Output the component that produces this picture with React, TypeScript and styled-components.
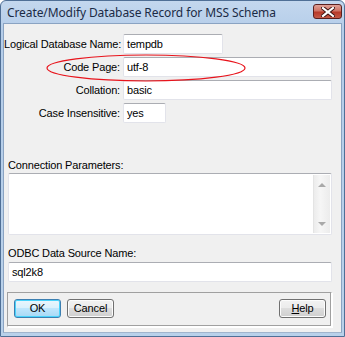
import React from 'react'
import styled, { createGlobalStyle } from 'styled-components'

const GlobalStyle = createGlobalStyle`
  html, body {
    margin: 0;
    padding: 0;
    background: #ffffff;
  }
  body {
    font-family: "Liberation Sans", Arial, sans-serif;
    font-size: 11px;
    letter-spacing: -0.15px;
    color: #000;
  }
`

const FIELDS = [
  { label: 'Logical Database Name:', value: 'tempdb', width: 100 },
  { label: 'Code Page:', value: 'utf-8', width: 209 },
  { label: 'Collation:', value: 'basic', width: 209 },
  { label: 'Case Insensitive:', value: 'yes', width: 43 },
]

export default function App() {
  return (
    <>
      <GlobalStyle />
      <Window>
        <TitleBar>
          <Title>Create/Modify Database Record for MSS Schema</Title>
          <CloseButton aria-label="Close">
            <svg width="14" height="10" viewBox="0 0 14 10">
              <path d="M2 1 L12 9 M12 1 L2 9" stroke="#3a1010" strokeWidth="4" strokeLinecap="square" />
              <path d="M2 1 L12 9 M12 1 L2 9" stroke="#ffffff" strokeWidth="2.2" strokeLinecap="square" />
            </svg>
          </CloseButton>
        </TitleBar>
        <Body>
          <FieldGrid>
            {FIELDS.map(f => (
              <React.Fragment key={f.label}>
                <Label>{f.label}</Label>
                <TextBox $width={f.width}>{f.value}</TextBox>
              </React.Fragment>
            ))}
          </FieldGrid>

          <BlockLabel $top={36} $bottom={1}>Connection Parameters:</BlockLabel>
          <MemoBox>
            <MemoArea />
            <ScrollBar>
              <Arrow $dir="up" />
              <Arrow $dir="down" />
            </ScrollBar>
          </MemoBox>

          <BlockLabel $top={12} $bottom={2}>ODBC Data Source Name:</BlockLabel>
          <WideBox>sql2k8</WideBox>

          <ButtonGroup>
            <PushButton $default>OK</PushButton>
            <PushButton>Cancel</PushButton>
            <Spacer />
            <PushButton><u>H</u>elp</PushButton>
          </ButtonGroup>

          <Ellipse width="202" height="30" viewBox="0 0 202 30">
            <ellipse cx="101" cy="15" rx="99" ry="13" fill="none" stroke="#e8141c" strokeWidth="1.2" />
          </Ellipse>
        </Body>
      </Window>
    </>
  )
}

const Window = styled.div`
  width: 345px;
  height: 337px;
  box-sizing: border-box;
  border: 1px solid #4f6f96;
  border-radius: 6px 6px 0 0;
  background: linear-gradient(#c3d7ee, #b5cde9 30px, #b9d1ea);
  display: flex;
  flex-direction: column;
  padding: 0 2px 3px 2px;
`

const TitleBar = styled.div`
  height: 22px;
  display: flex;
  align-items: flex-start;
  flex-shrink: 0;
`

const Title = styled.div`
  font-family: "Noto Sans", "Open Sans", sans-serif;
  font-size: 12px;
  letter-spacing: -0.1px;
  color: #1b2b45;
  padding: 3px 0 0 4px;
`

const CloseButton = styled.div`
  margin-left: auto;
  margin-top: 3px;
  margin-right: 0;
  width: 29px;
  height: 15px;
  box-sizing: border-box;
  border: 1px solid #5a2020;
  border-radius: 3px;
  background: linear-gradient(#e0a197, #cf7365 45%, #b83a2a 55%, #c45a48);
  display: flex;
  align-items: center;
  justify-content: center;
`

const Body = styled.div`
  position: relative;
  flex: 1;
  background: #f0f0f0;
  border: 1px solid #8aa3c2;
  border-bottom-color: #a0b4cc;
  display: flex;
  flex-direction: column;
  padding: 10px 9px 0 0;
`

const FieldGrid = styled.div`
  display: grid;
  grid-template-columns: 116px auto;
  column-gap: 3px;
  row-gap: 3px;
  align-items: center;
`

const Label = styled.div`
  text-align: right;
  white-space: nowrap;
`

const inputLook = `
  box-sizing: border-box;
  height: 20px;
  background: #ffffff;
  border: 1px solid #e2e3ea;
  border-top-color: #abadb3;
  border-radius: 2px;
  padding: 3px 0 0 3px;
  line-height: 13px;
`

const TextBox = styled.div<{ $width: number }>`
  ${inputLook}
  width: ${p => p.$width}px;
`

const BlockLabel = styled.div<{ $top: number; $bottom: number }>`
  margin: ${p => p.$top}px 0 ${p => p.$bottom}px 4px;
  line-height: 13px;
`

const MemoBox = styled.div`
  margin-left: 4px;
  height: 62px;
  box-sizing: border-box;
  border: 1px solid #e2e3ea;
  border-top-color: #abadb3;
  border-radius: 2px;
  background: #ffffff;
  display: flex;
`

const MemoArea = styled.div`
  flex: 1;
`

const ScrollBar = styled.div`
  width: 16px;
  margin: 1px 1px 1px 0;
  background: linear-gradient(90deg, #ececec, #f6f6f6 40%, #ececec);
  border-left: 1px solid #e4e4e4;
  display: flex;
  flex-direction: column;
  justify-content: space-between;
  align-items: center;
  padding: 8px 0 7px;
`

const Arrow = styled.div<{ $dir: 'up' | 'down' }>`
  width: 0;
  height: 0;
  border-left: 4px solid transparent;
  border-right: 4px solid transparent;
  ${p => p.$dir === 'up'
    ? 'border-bottom: 4px solid #a9a9a9;'
    : 'border-top: 4px solid #a9a9a9;'}
`

const WideBox = styled.div`
  ${inputLook}
  margin-left: 4px;
`

const ButtonGroup = styled.div`
  margin: 10px 0 0 3px;
  height: 35px;
  box-sizing: border-box;
  border: 1px solid;
  border-color: #a0a0a0 #ffffff #ffffff #a0a0a0;
  box-shadow: inset -1px -1px 0 #a0a0a0, 1px 1px 0 #ffffff;
  display: flex;
  align-items: flex-start;
  gap: 6px;
  padding: 6px 5px 0 6px;
`

const Spacer = styled.div`
  flex: 1;
`

const PushButton = styled.div<{ $default?: boolean }>`
  width: 47px;
  height: 19px;
  box-sizing: border-box;
  border: 1px solid ${p => (p.$default ? '#3c7fb1' : '#707070')};
  border-radius: 3px;
  background: ${p => (p.$default
    ? 'linear-gradient(#eaf6fd, #d9f0fc 50%, #bee6fd 50%, #a7d9f5)'
    : 'linear-gradient(#f2f2f2, #ebebeb 50%, #dddddd 50%, #cfcfcf)')};
  box-shadow: inset 0 0 0 1px ${p => (p.$default ? '#48d3fb' : '#fcfcfc')};
  display: flex;
  align-items: center;
  justify-content: center;
  line-height: 13px;
  & u {
    text-decoration: underline;
  }
`

const Ellipse = styled.svg`
  position: absolute;
  left: 41px;
  top: 29px;
  pointer-events: none;
`
